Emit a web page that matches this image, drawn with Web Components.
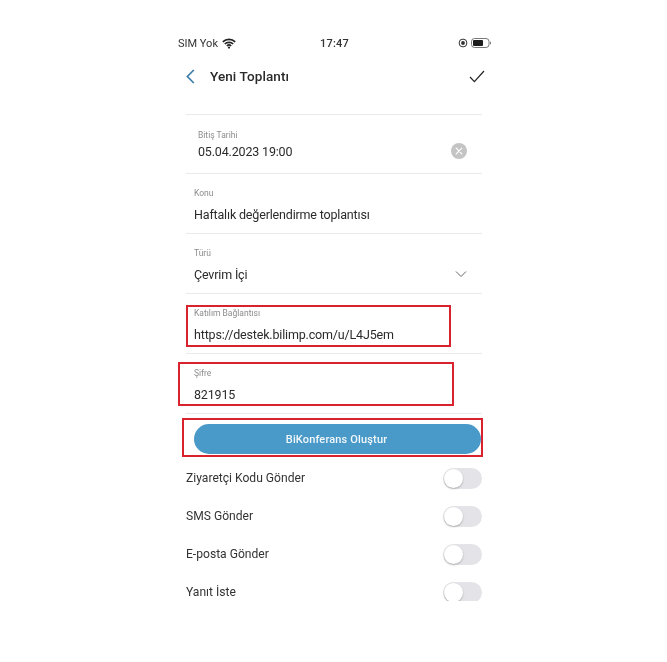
<!DOCTYPE html>
<html lang="tr">
<head>
<meta charset="utf-8">
<title>Yeni Toplantı</title>
<style>
  html, body { margin: 0; background: #fff; }
  body { font-family: Roboto, "Liberation Sans", sans-serif; color: #2b2b2b; }
</style>
</head>
<body>
<app-screen>
  <status-bar></status-bar>
  <nav-bar title="Yeni Toplantı"></nav-bar>
  <form-field label="Bitiş Tarihi" value="05.04.2023 19:00" indent first>
    <svg slot="end" width="16" height="16" viewBox="0 0 16 16"><circle cx="8" cy="8" r="8" fill="#c4c4c4"/><path d="M5.2 5.2l5.6 5.6M10.8 5.2l-5.6 5.6" stroke="#fff" stroke-width="1.2" stroke-linecap="round"/></svg>
  </form-field>
  <form-field label="Konu" value="Haftalık değerlendirme toplantısı" wide></form-field>
  <form-field label="Türü" value="Çevrim İçi" wide>
    <svg slot="end" width="12" height="8" viewBox="0 0 12 8"><path d="M1 1.5l5 5 5-5" fill="none" stroke="#666" stroke-width="1"/></svg>
  </form-field>
  <form-field label="Katılım Bağlantısı" value="https://destek.bilimp.com/u/L4J5em" wide></form-field>
  <form-field label="Şifre" value="821915" wide></form-field>
  <action-button>BiKonferans Oluştur</action-button>
  <toggle-row>Ziyaretçi Kodu Gönder</toggle-row>
  <toggle-row>SMS Gönder</toggle-row>
  <toggle-row>E-posta Gönder</toggle-row>
  <toggle-row>Yanıt İste</toggle-row>
  <!-- annotations drawn over the screenshot -->
  <mark-box style="left:16px;top:305px;width:261px;height:38px"></mark-box>
  <mark-box style="left:8px;top:362px;width:272px;height:40px"></mark-box>
  <mark-box style="left:12px;top:418px;width:297px;height:35px"></mark-box>
</app-screen>

<script>
class AppScreen extends HTMLElement {
  constructor() {
    super()
    this.attachShadow({ mode: 'open' }).innerHTML = `<style>
      :host { display: block; position: relative; width: 327px; height: 601px; margin-left: 170px; overflow: hidden; filter: blur(.35px); }
    </style><slot></slot>`
  }
}

class StatusBar extends HTMLElement {
  constructor() {
    super()
    this.attachShadow({ mode: 'open' }).innerHTML = `<style>
      :host { display: grid; grid-template-columns: 1fr auto 1fr; align-items: center; height: 14px; margin-top: 36px; padding: 0 6px 0 8px; font-size: 11px; color: #333; }
      .left { display: flex; align-items: center; gap: 4px; }
      .time { font-weight: 500; font-size: 11px; letter-spacing: .2px; }
      .right { display: flex; align-items: center; justify-content: flex-end; gap: 3px; }
    </style>
    <div class="left">SIM Yok
      <svg width="14" height="11" viewBox="0 0 14 11"><path d="M.8 3.9a8.9 8.9 0 0 1 12.4 0M2.8 6a6 6 0 0 1 8.4 0M4.9 8a3 3 0 0 1 4.2 0" fill="none" stroke="#222" stroke-width="1.7"/><circle cx="7" cy="9.6" r="1.1" fill="#222"/></svg>
    </div>
    <div class="time">17:47</div>
    <div class="right">
      <svg width="10" height="10" viewBox="0 0 10 10"><circle cx="5" cy="5" r="3.9" fill="none" stroke="#333"/><circle cx="5" cy="5" r="1.9" fill="#333"/></svg>
      <svg width="20" height="10" viewBox="0 0 20 10"><rect x=".5" y=".5" width="17.5" height="9" rx="3" fill="none" stroke="#555" stroke-width=".8"/><rect x="2" y="2" width="10" height="6" rx="1" fill="#1c1c1c"/><path d="M19 3.5v3a1.7 1.7 0 0 0 0-3z" fill="#555"/></svg>
    </div>`
  }
}

class NavBar extends HTMLElement {
  constructor() {
    super()
    this.attachShadow({ mode: 'open' }).innerHTML = `<style>
      :host { display: flex; align-items: center; height: 26px; margin: 13px 12px 25px 16px; }
      h1 { flex: 1; margin: 0 0 0 15px; font-size: 13.5px; font-weight: 500; color: #2a2a2a; letter-spacing: .1px; }
    </style>
    <svg width="9" height="15" viewBox="0 0 9 15"><path d="M7.8 1L1.4 7.5l6.4 6.5" fill="none" stroke="#3a7ca8" stroke-width="1.7"/></svg>
    <h1>${this.getAttribute('title')}</h1>
    <svg width="16" height="13" viewBox="0 0 16 13"><path d="M1 7l4.4 4.6L15 1" fill="none" stroke="#222" stroke-width="1.2"/></svg>`
  }
}

class FormField extends HTMLElement {
  constructor() {
    super()
    this.attachShadow({ mode: 'open' }).innerHTML = `<style>
      :host { display: block; box-sizing: border-box; height: 60px; margin-left: 16px; width: 296px; border-bottom: 1px solid #e9e9e9; padding: 13px 0 0 8px; }
      :host([first]) { height: 60px; border-top: 1px solid #e9e9e9; padding-top: 14px; }
      :host([indent]) { padding-left: 12px; }
      .label { font-size: 8.5px; line-height: 12px; color: #8c8c8c; }
      .row { display: flex; align-items: center; justify-content: space-between; height: 20px; margin-top: 5px; padding-right: 15px; font-size: 12.5px; color: #2b2b2b; letter-spacing: -.17px; }
      :host([indent]) .row { margin-top: 0; }
    </style>
    <div class="label">${this.getAttribute('label')}</div>
    <div class="row"><span>${this.getAttribute('value')}</span><slot name="end"></slot></div>`
  }
}

class ActionButton extends HTMLElement {
  constructor() {
    super()
    this.attachShadow({ mode: 'open' }).innerHTML = `<style>
      :host { display: flex; align-items: center; justify-content: center; height: 30px; margin: 10px 16px 5px 24px; padding-right: 2px; border-radius: 15px; background: #4a9ac9; color: #f2f7fa; font-size: 11px; font-weight: 500; letter-spacing: .15px; }
    </style><slot></slot>`
  }
}

class ToggleRow extends HTMLElement {
  constructor() {
    super()
    this.attachShadow({ mode: 'open' }).innerHTML = `<style>
      :host { display: flex; align-items: center; justify-content: space-between; height: 38px; margin: 0 15px 0 16px; font-size: 12.1px; color: #333; }
      .track { width: 39px; height: 21px; border-radius: 11px; background: #e4e4e8; position: relative; }
      .knob { position: absolute; left: 1px; top: 1px; width: 19px; height: 19px; border-radius: 50%; background: #fff; box-shadow: 0 1px 2px rgba(0,0,0,.25); }
    </style><slot></slot><div class="track"><div class="knob"></div></div>`
  }
}

class MarkBox extends HTMLElement {
  constructor() {
    super()
    this.attachShadow({ mode: 'open' }).innerHTML = `<style>
      :host { display: block; position: absolute; border: 2px solid #d8232f; }
    </style>`
  }
}

customElements.define('app-screen', AppScreen)
customElements.define('status-bar', StatusBar)
customElements.define('nav-bar', NavBar)
customElements.define('form-field', FormField)
customElements.define('action-button', ActionButton)
customElements.define('toggle-row', ToggleRow)
customElements.define('mark-box', MarkBox)
</script>
</body>
</html>
